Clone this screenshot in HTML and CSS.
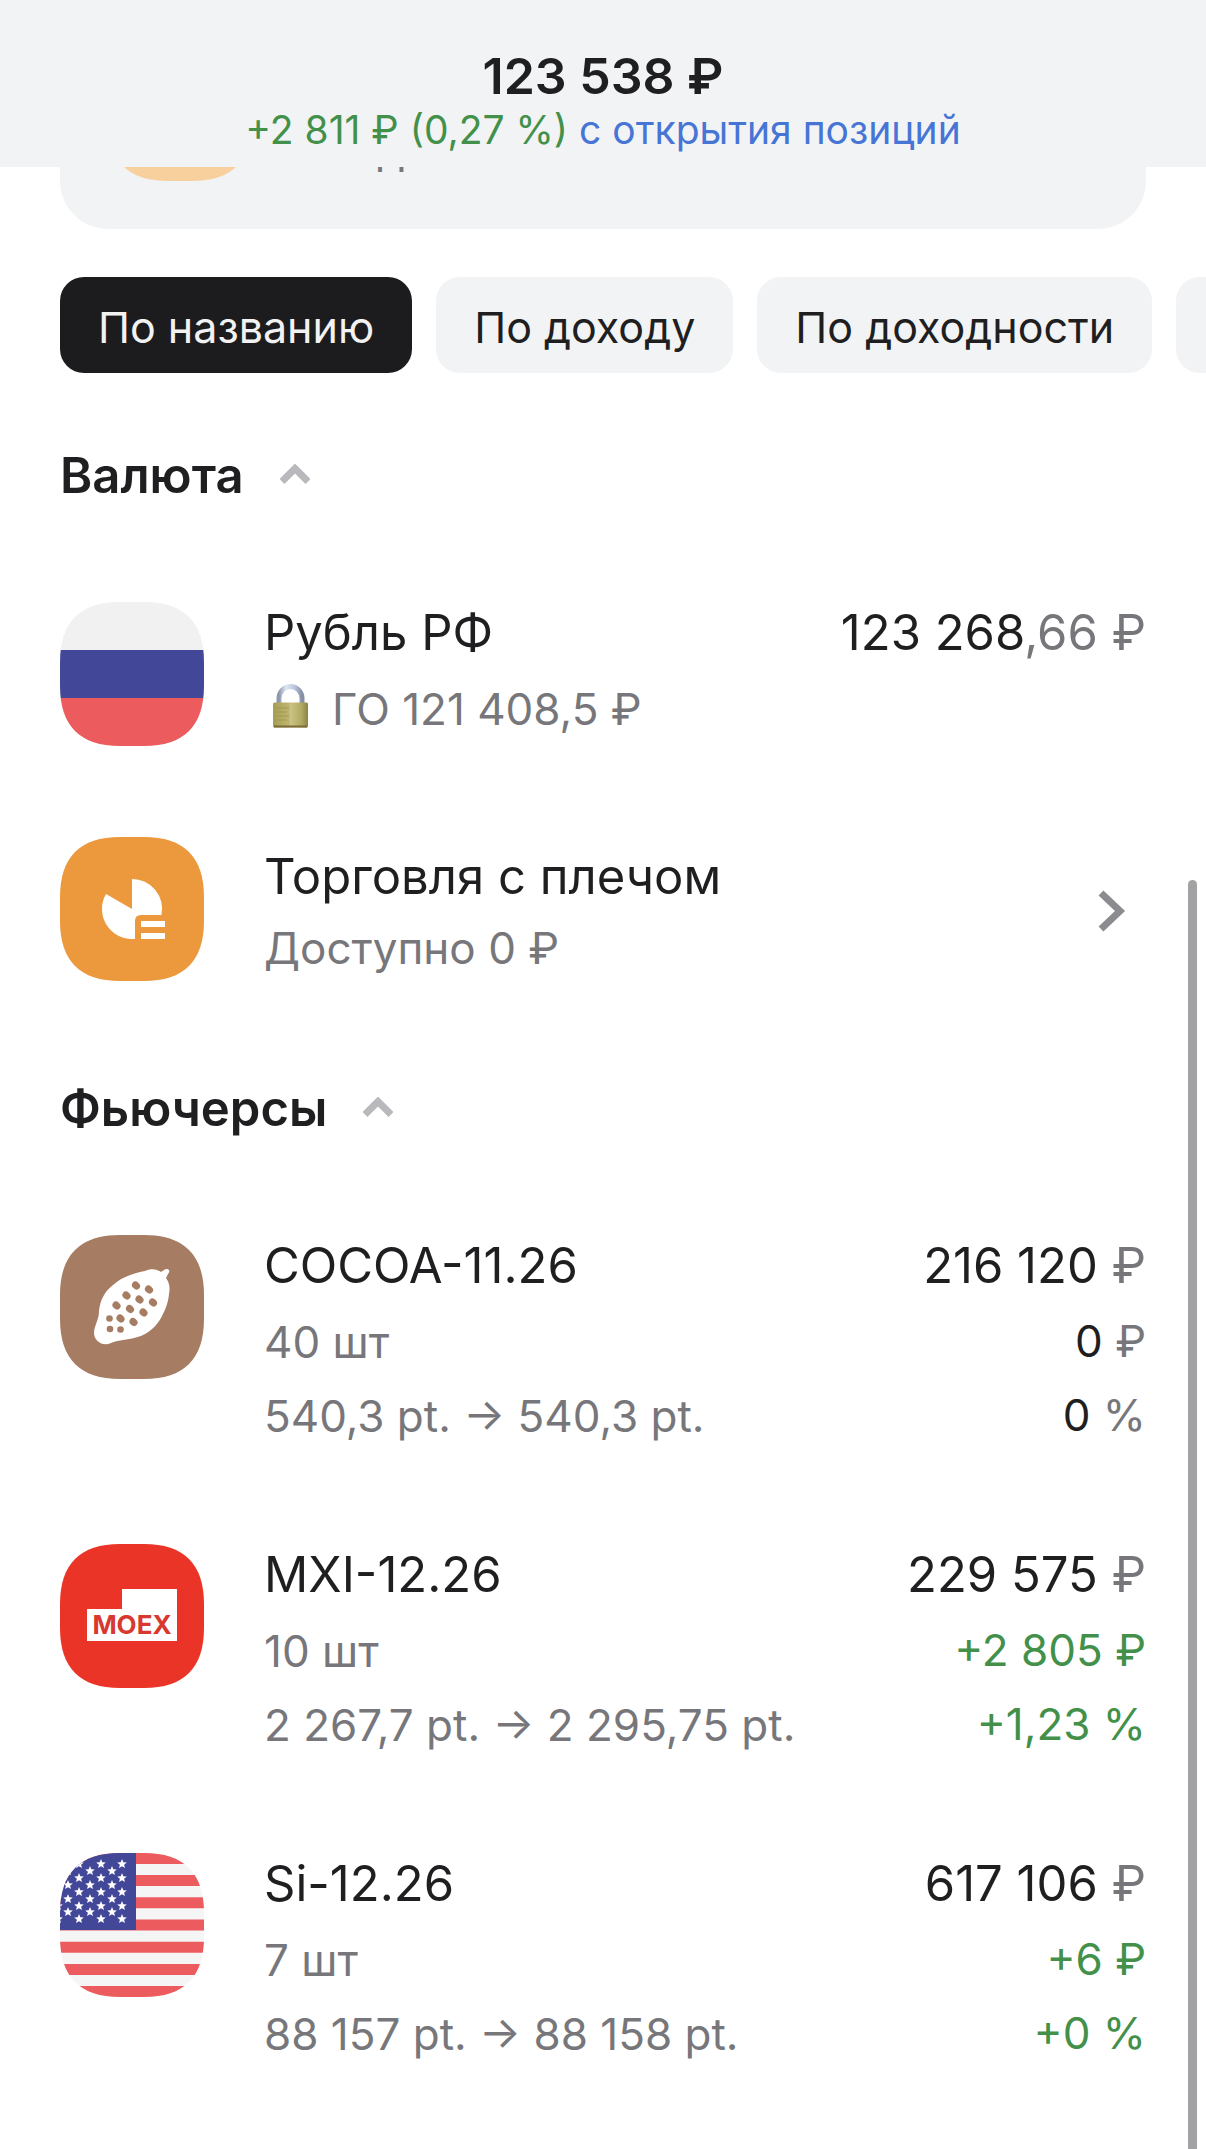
FILE: index.html
```html
<!DOCTYPE html>
<html lang="ru">
<head>
<meta charset="utf-8">
<meta name="viewport" content="width=device-width, initial-scale=1">
<title>Портфель</title>
<link rel="stylesheet" href="styles.css">
</head>
<body>
<svg class="defs" aria-hidden="true">
  <defs>
    <clipPath id="squircle"><path d="M0 60C0 20 20 0 60 0H84C124 0 144 20 144 60V84C144 124 124 144 84 144H60C20 144 0 124 0 84Z"/></clipPath>
    <path id="star" d="M0-5 1.300-1.700 4.800-1.500 2.100.700 3 4.100 0 2.200-3 4.100-2.100.700-4.800-1.500-1.300-1.700Z"/>
    <linearGradient id="shackle" x1="0" x2="1"><stop offset="0" stop-color="#8e97ad"/><stop offset=".3" stop-color="#dfe6f5"/><stop offset=".7" stop-color="#b9c3da"/><stop offset="1" stop-color="#868ea4"/></linearGradient>
    <linearGradient id="brass" x1="0" x2="1"><stop offset="0" stop-color="#a89d55"/><stop offset=".45" stop-color="#bdb56f"/><stop offset=".5" stop-color="#c9c384"/><stop offset=".8" stop-color="#b3aa62"/><stop offset="1" stop-color="#8b8344"/></linearGradient>
  </defs>
</svg>

<header class="topbar">
  <h1 class="topbar-total">123 538 ₽</h1>
  <p class="topbar-change"><span class="gain">+2 811 ₽ (0,27 %)</span> <a class="period" href="#positions">с открытия позиций</a></p>
</header>

<main class="content">
  <section class="promo">
    <svg class="logo" viewBox="0 0 144 144" aria-hidden="true"><rect width="144" height="144" fill="#f8d09d" clip-path="url(#squircle)"/></svg>
    <p class="promo-text">Выдано</p>
  </section>

  <nav class="chips" aria-label="Сортировка">
    <button class="chip chip-active" type="button">По названию</button>
    <button class="chip" type="button">По доходу</button>
    <button class="chip" type="button">По доходности</button>
    <button class="chip" type="button">По цене</button>
  </nav>

  <section class="group" id="positions">
    <h2><button class="group-toggle" type="button">Валюта
      <svg class="caret" viewBox="0 0 30 24" aria-hidden="true"><path d="M2 17.500 15 4.500 28 17.500"/></svg></button></h2>
    <ul class="rows">
      <li class="row">
        <svg class="logo" viewBox="0 0 144 144" aria-hidden="true"><g clip-path="url(#squircle)"><rect width="144" height="48" fill="#f1f1f2"/><rect y="48" width="144" height="48" fill="#434797"/><rect y="96" width="144" height="48" fill="#ec5b5d"/></g></svg>
        <div class="copy">
          <p class="name">Рубль РФ</p>
          <p class="detail"><svg class="lock" viewBox="0 0 52 44" aria-hidden="true"><path d="M15 22V14.500a11.500 12 0 0 1 23 0V22" fill="none" stroke="url(#shackle)" stroke-width="5"/><rect x="9" y="18.500" width="35" height="25" rx="1.500" fill="url(#brass)"/><path d="M10 42.500H43" stroke="#7d6b38" stroke-width="2"/><path d="M10 24H25M10 28H23M10 32H25M10 36H23" stroke="#a39a52" stroke-width="1"/></svg>ГО 121 408,5 ₽</p>
        </div>
        <div class="figures"><p class="amount">123 268<span class="muted">,66 ₽</span></p></div>
      </li>
      <li>
        <a class="row" href="#margin">
          <svg class="logo" viewBox="0 0 144 144" aria-hidden="true"><rect width="144" height="144" fill="#ec993d" clip-path="url(#squircle)"/><g fill="#fff"><path d="M72 42A30 30 0 0 1 101.500 78H81Q75 78 75 84V102H72A30 30 0 0 1 46 57L72 72Z"/><path d="M81 84h24v6H81zM81 96h24v6H81z"/></g></svg>
          <div class="copy copy-action">
            <p class="name">Торговля с плечом</p>
            <p class="detail">Доступно 0 ₽</p>
          </div>
          <svg class="go" viewBox="0 0 28 42" aria-hidden="true"><path d="M3 3 22 21 3 39"/></svg>
        </a>
      </li>
    </ul>
  </section>

  <section class="group">
    <h2><button class="group-toggle" type="button">Фьючерсы
      <svg class="caret" viewBox="0 0 30 24" aria-hidden="true"><path d="M2 17.500 15 4.500 28 17.500"/></svg></button></h2>
    <ul class="rows">
      <li class="row">
        <svg class="logo" viewBox="0 0 144 144" aria-hidden="true"><rect width="144" height="144" fill="#a67d63" clip-path="url(#squircle)"/><path fill="#fff" d="M104 35Q107 33 109 35 110 37 108 39L106 43Q111 50 109 59C108 70 104 77 101 83 94 95 84 101 74 103 65 105 58 105 51 108 43 112 34 106 34 98 34 91 39 85 39 76 40 65 45 56 53 50 63 41 75 38 85 36 91 33 97 34 101 37Z"/><g fill="#a67d63"><ellipse cx="76" cy="50.500" rx="4.300" ry="3.600" transform="rotate(40 76 50.500)"/><ellipse cx="89" cy="54.500" rx="4.300" ry="3.600" transform="rotate(40 89 54.500)"/><ellipse cx="66.500" cy="60.500" rx="4.300" ry="3.600" transform="rotate(40 66.500 60.500)"/><ellipse cx="79.500" cy="64.500" rx="4.300" ry="3.600" transform="rotate(40 79.500 64.500)"/><ellipse cx="93" cy="67.500" rx="4.300" ry="3.600" transform="rotate(40 93 67.500)"/><ellipse cx="56.500" cy="70.500" rx="4.300" ry="3.600" transform="rotate(40 56.500 70.500)"/><ellipse cx="70" cy="74" rx="4.300" ry="3.600" transform="rotate(40 70 74)"/><ellipse cx="83.500" cy="77.500" rx="4.300" ry="3.600" transform="rotate(40 83.500 77.500)"/><ellipse cx="60.500" cy="83.500" rx="4.300" ry="3.600" transform="rotate(40 60.500 83.500)"/><ellipse cx="73.500" cy="87" rx="4.300" ry="3.600" transform="rotate(40 73.500 87)"/><circle cx="49.500" cy="83.500" r="3.300"/><circle cx="50" cy="94" r="3.300"/><circle cx="60.500" cy="94.500" r="3.300"/></g></svg>
        <div class="copy">
          <p class="name">COCOA-11.26</p>
          <p class="detail">40 шт</p>
          <p class="detail">540,3 pt. → 540,3 pt.</p>
        </div>
        <div class="figures">
          <p class="amount">216 120 <span class="muted">₽</span></p>
          <p class="delta">0 <span class="muted">₽</span></p>
          <p class="delta">0 <span class="muted">%</span></p>
        </div>
      </li>
      <li class="row">
        <svg class="logo" viewBox="0 0 144 144" role="img" aria-label="MOEX"><rect width="144" height="144" fill="#ea3428" clip-path="url(#squircle)"/><path fill="#fff" d="M27 65H62V45H117V97H27Z"/><text class="moex" x="72" y="90" text-anchor="middle">MOEX</text></svg>
        <div class="copy">
          <p class="name">MXI-12.26</p>
          <p class="detail">10 шт</p>
          <p class="detail">2 267,7 pt. → 2 295,75 pt.</p>
        </div>
        <div class="figures">
          <p class="amount">229 575 <span class="muted">₽</span></p>
          <p class="delta gain">+2 805 ₽</p>
          <p class="delta gain">+1,23 %</p>
        </div>
      </li>
      <li class="row">
        <svg class="logo" viewBox="0 0 144 144" aria-hidden="true"><g clip-path="url(#squircle)"><rect width="144" height="144" fill="#f5f5f6"/><path stroke="#ec5b5d" stroke-width="11" d="M0 5.500H144M0 27.600H144M0 49.800H144M0 72H144M0 94.200H144M0 116.400H144M0 138.500H144"/><rect width="76" height="77" fill="#434797"/><g fill="#fff">
          <use href="#star" x="19" y="11"/><use href="#star" x="41" y="11"/><use href="#star" x="62" y="11"/>
          <use href="#star" x="8" y="18"/><use href="#star" x="30" y="18"/><use href="#star" x="52" y="18"/>
          <use href="#star" x="19" y="25"/><use href="#star" x="41" y="25"/><use href="#star" x="62" y="25"/>
          <use href="#star" x="8" y="32"/><use href="#star" x="30" y="32"/><use href="#star" x="52" y="32"/>
          <use href="#star" x="19" y="39"/><use href="#star" x="41" y="39"/><use href="#star" x="62" y="39"/>
          <use href="#star" x="8" y="46"/><use href="#star" x="30" y="46"/><use href="#star" x="52" y="46"/>
          <use href="#star" x="-2" y="53"/><use href="#star" x="19" y="53"/><use href="#star" x="41" y="53"/><use href="#star" x="62" y="53"/>
          <use href="#star" x="8" y="59"/><use href="#star" x="30" y="59"/><use href="#star" x="52" y="59"/>
          <use href="#star" x="-2" y="66"/><use href="#star" x="19" y="66"/><use href="#star" x="41" y="66"/><use href="#star" x="62" y="66"/>
        </g></g></svg>
        <div class="copy">
          <p class="name">Si-12.26</p>
          <p class="detail">7 шт</p>
          <p class="detail">88 157 pt. → 88 158 pt.</p>
        </div>
        <div class="figures">
          <p class="amount">617 106 <span class="muted">₽</span></p>
          <p class="delta gain">+6 ₽</p>
          <p class="delta gain">+0 %</p>
        </div>
      </li>
    </ul>
  </section>
</main>
<div class="scroll-thumb" aria-hidden="true"></div>
</body>
</html>
```
FILE: styles.css
```css
* {
  box-sizing: border-box;
}

body {
  margin: 0;
  background: #fff;
  color: #1f1f21;
  font-family: Inter, "Liberation Sans", sans-serif;
  font-size: 44px;
  overflow-x: hidden;
}

h1,
h2,
p,
ul {
  margin: 0;
  padding: 0;
}

ul {
  list-style: none;
}

button {
  border: 0;
  color: inherit;
  font-family: inherit;
}

a {
  color: inherit;
  text-decoration: none;
}

.defs {
  position: absolute;
  width: 0;
  height: 0;
}

.topbar {
  position: sticky;
  top: 0;
  z-index: 2;
  padding: 46px 24px 13px;
  background: #f2f3f5;
  text-align: center;
}

.topbar-total {
  font-size: 50px;
  font-weight: 600;
  line-height: 60px;
}

.topbar-change {
  font-size: 39px;
  line-height: 48px;
}

.gain {
  color: #43904a;
}

.period {
  color: #4775d5;
}

.content {
  padding: 0 60px 79px;
}

.promo {
  display: flex;
  gap: 64px;
  margin-top: -178px;
  padding: 48px;
  border-radius: 48px;
  background: #f2f3f5;
}

.promo-text {
  align-self: flex-end;
  color: #77777b;
  line-height: 64px;
}

.logo {
  display: block;
  flex: none;
  width: 144px;
  height: 144px;
}

.moex {
  fill: #d8382f;
  font-size: 26px;
  font-weight: 700;
}

.chips {
  display: flex;
  gap: 24px;
  margin: 48px -60px 73px;
  padding: 0 60px;
  overflow: hidden;
}

.chip {
  flex: none;
  padding: 4px 38px 0;
  border-radius: 24px;
  background: #f2f3f5;
  font-size: 43px;
  line-height: 92px;
}

.chip-active {
  background: #1c1c1e;
  color: #f2f2f3;
}

.group + .group {
  margin-top: 94px;
}

.group-toggle {
  display: flex;
  align-items: center;
  gap: 36px;
  margin-bottom: 96px;
  padding: 0;
  background: none;
  font-size: 49px;
  font-weight: 600;
  line-height: 60px;
}

.caret {
  width: 30px;
  height: 24px;
  fill: none;
  stroke: #b9b9bd;
  stroke-width: 7;
}

.rows {
  display: grid;
  gap: 91px;
}

.row {
  display: flex;
  align-items: flex-start;
}

.copy {
  display: grid;
  flex: 1;
  padding-left: 60px;
}

.name,
.amount {
  font-size: 49px;
  line-height: 62px;
}

.name {
  margin-bottom: 8px;
}

.amount {
  margin-bottom: 7px;
}

.copy-action {
  padding-top: 9px;
}

.copy-action .name {
  margin-bottom: 3px;
}

.detail,
.delta {
  line-height: 74px;
}

.detail,
.muted {
  color: #77777b;
}

.lock {
  width: 52px;
  height: 44px;
  margin-right: 16px;
  vertical-align: -3px;
}

.figures {
  text-align: right;
}

.go {
  align-self: center;
  width: 28px;
  height: 42px;
  margin-right: 20px;
  fill: none;
  stroke: #8b8b90;
  stroke-width: 7;
}

.scroll-thumb {
  position: fixed;
  top: 880px;
  right: 9px;
  bottom: 0;
  width: 9px;
  border-radius: 5px 5px 0 0;
  background: #a2a2a4;
}
```
